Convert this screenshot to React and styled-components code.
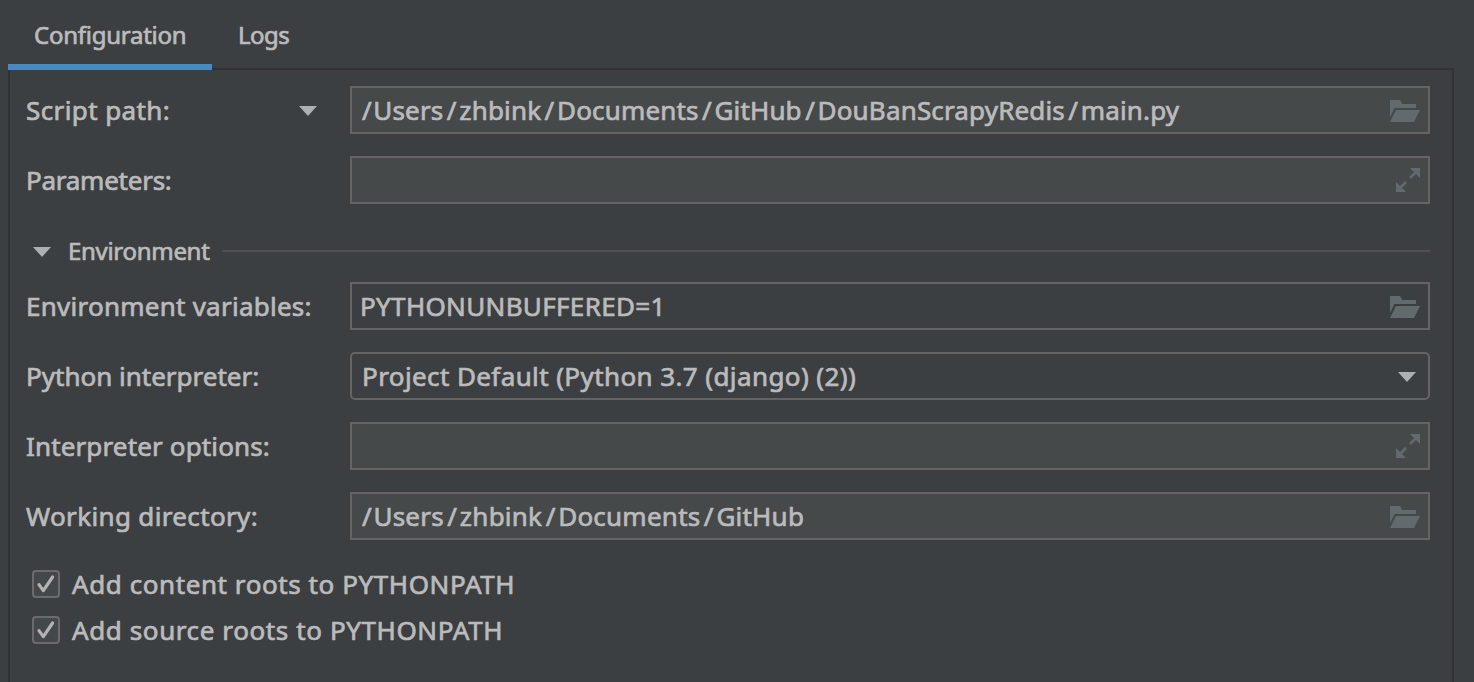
import React, {Fragment} from 'react';
import styled, {createGlobalStyle} from 'styled-components';

const GlobalStyle = createGlobalStyle`
  * {
    box-sizing: border-box;
  }

  body {
    margin: 0;
    background: #3c3f41;
    color: #bbbbbb;
    font-family: 'Noto Sans', 'Open Sans', sans-serif;
    font-size: 26px;
    overflow: hidden;
  }
`;

const Window = styled.div`
  display: flex;
  flex-direction: column;
  height: 682px;
  padding: 0 20px 0 8px;
`;

const Tabs = styled.div`
  display: flex;
  height: 68px;
`;

const Tab = styled.div`
  position: relative;
  width: ${({width}) => width}px;
  height: 70px;
  padding-left: 26px;
  line-height: 70px;
  font-size: 24px;
  border-bottom: ${({active}) => (active ? '6px solid #4a88c7' : '0')};
`;

const Panel = styled.div`
  flex: 1;
  display: flex;
  flex-direction: column;
  padding: 16px 22px 0 16px;
  border: 2px solid #323232;
  border-bottom: 0;
`;

const Row = styled.div`
  display: flex;
  align-items: center;
  height: 48px;
  margin-bottom: 22px;
`;

const Label = styled.div`
  display: flex;
  align-items: center;
  justify-content: space-between;
  width: 324px;
  padding-right: 33px;
`;

const Text = styled.span`
  white-space: pre;
  line-height: 36px;
  letter-spacing: ${({spacing}) => spacing || 0}px;
  -webkit-text-stroke: 0.7px #bbbbbb;
`;

const Slash = styled.span`
  margin: 0 2.6px 0 3.4px;

  &:first-child {
    margin-left: 0;
    margin-right: 1.5px;
  }
`;

const Field = styled.div`
  flex: 1;
  display: flex;
  align-items: center;
  justify-content: space-between;
  height: 48px;
  padding: 0 ${({combo}) => (combo ? 12 : 8)}px 0 ${({inset}) => inset || 10}px;
  border: 2px solid #646464;
  border-radius: ${({combo}) => (combo ? 5 : 0)}px;
  background: ${({plain}) => (plain ? 'transparent' : '#45494a')};
`;

const Separator = styled.div`
  display: flex;
  align-items: center;
  height: 50px;
  margin-bottom: 6px;
  padding-left: 7px;
  font-size: 24px;

  ${Text} {
    margin: 0 12px 0 17px;
  }
`;

const Line = styled.div`
  flex: 1;
  height: 2px;
  background: #515151;
`;

const CheckRow = styled.div`
  display: flex;
  align-items: center;
  height: 28px;
  margin: 8px 0 10px;
  padding-left: 6px;
  gap: 12px;
`;

const Box = styled.span`
  display: flex;
  width: 28px;
  height: 28px;
  border: 2px solid #6b6b6b;
  border-radius: 4px;
  background: #43494a;
`;

const Arrow = () => (
  <svg width="18" height="12" viewBox="0 0 18 12">
    <path d="M0 2h18L9 12z" fill="#adb0b2"/>
  </svg>
);

const Folder = () => (
  <svg width="30" height="24" viewBox="0 0 30 24" fill="#626a6e">
    <path d="M0 2h10l2.3 4H26v4H4.5L0 19z"/>
    <path d="M6 12h24l-6 12H0z"/>
  </svg>
);

const Expand = () => (
  <svg width="24" height="24" viewBox="0 0 24 24" fill="#626a6e">
    <path d="M14 0h10v10z"/>
    <path d="M0 14v10h10z"/>
    <path d="M14 10l6-6M4 20l6-6" stroke="#626a6e" strokeWidth="2.6"/>
  </svg>
);

const Tick = () => (
  <svg width="24" height="24" viewBox="0 0 24 24" fill="none">
    <path d="M5 12.6l4.3 6L18.6 5" stroke="#b2b2b2" strokeWidth="3.2" strokeLinecap="round" strokeLinejoin="round"/>
  </svg>
);

const icons = {folder: Folder, expand: Expand, arrow: Arrow};

const renderPath = (value = '') =>
  value.split('/').map((part, i) => (
    <Fragment key={i}>
      {i > 0 && <Slash>/</Slash>}
      {part}
    </Fragment>
  ));

const FormRow = ({label, spacing, value, valueSpacing, icon, dropdown, ...rest}) => {
  const Icon = icons[icon];

  return (
    <Row>
      <Label>
        <Text spacing={spacing}>{label}</Text>
        {dropdown && <Arrow/>}
      </Label>
      <Field {...rest}>
        <Text spacing={valueSpacing}>{renderPath(value)}</Text>
        <Icon/>
      </Field>
    </Row>
  );
};

const CheckOption = ({spacing, children}) => (
  <CheckRow>
    <Box><Tick/></Box>
    <Text spacing={spacing}>{children}</Text>
  </CheckRow>
);

const App = () => (
  <Window>
    <GlobalStyle/>
    <Tabs>
      <Tab width={204} active><Text spacing={-0.25}>Configuration</Text></Tab>
      <Tab width={104}><Text spacing={-0.55}>Logs</Text></Tab>
    </Tabs>
    <Panel>
      <FormRow
        label="Script path:"
        spacing={0.4}
        value="/Users/zhbink/Documents/GitHub/DouBanScrapyRedis/main.py"
        valueSpacing={0.16}
        icon="folder"
        dropdown
      />
      <FormRow label="Parameters:" spacing={-0.25} icon="expand"/>
      <Separator>
        <Arrow/>
        <Text spacing={-0.3}>Environment</Text>
        <Line/>
      </Separator>
      <FormRow
        label="Environment variables:"
        spacing={0.25}
        value="PYTHONUNBUFFERED=1"
        valueSpacing={0.33}
        icon="folder"
        inset={8}
        plain
      />
      <FormRow
        label="Python interpreter:"
        value="Project Default (Python 3.7 (django) (2))"
        valueSpacing={0.4}
        icon="arrow"
        plain
        combo
      />
      <FormRow label="Interpreter options:" spacing={0.14} icon="expand"/>
      <FormRow
        label="Working directory:"
        spacing={0.35}
        value="/Users/zhbink/Documents/GitHub"
        valueSpacing={0.24}
        icon="folder"
      />
      <CheckOption spacing={0.58}>Add content roots to PYTHONPATH</CheckOption>
      <CheckOption spacing={0.6}>Add source roots to PYTHONPATH</CheckOption>
    </Panel>
  </Window>
);

export default App;
